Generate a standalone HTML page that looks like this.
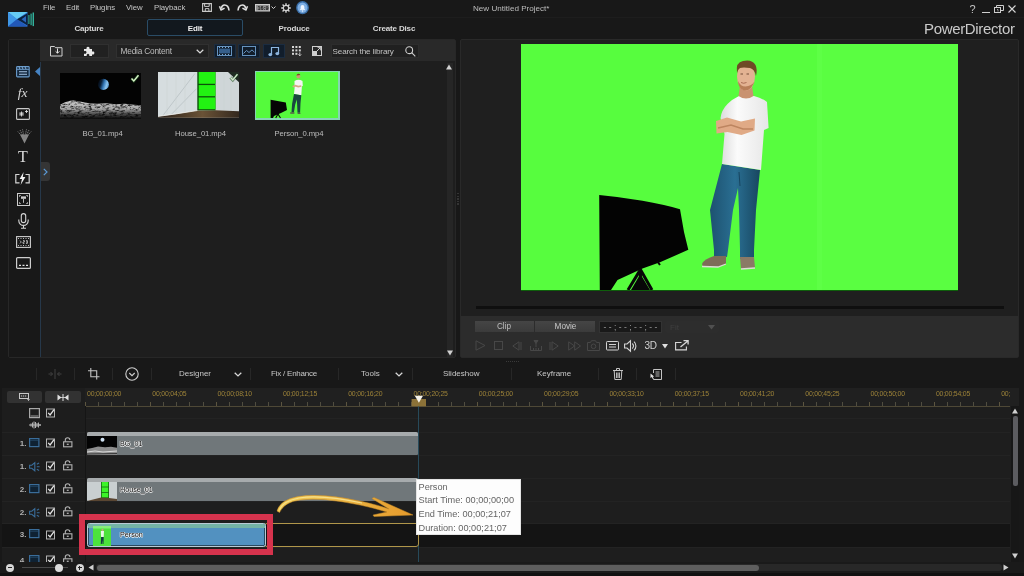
<!DOCTYPE html>
<html lang="en">
<head>
<meta charset="utf-8">
<title>New Untitled Project* - PowerDirector</title>
<style>
*{box-sizing:border-box;margin:0;padding:0}
html,body{width:1024px;height:576px;overflow:hidden;background:#181818}
body{position:relative;font-family:"Liberation Sans",sans-serif;font-size:9px;color:#c8c8c8;opacity:0.999}
.a{position:absolute}
.t{position:absolute;white-space:nowrap;line-height:1;transform:translateY(-50%)}
.c{position:absolute;white-space:nowrap;line-height:1;transform:translate(-50%,-50%)}
svg{position:absolute;overflow:visible}
.sep{position:absolute;width:1px;height:12px;top:368px;background:#272727}
.rt{position:absolute;top:394px;font-size:6.900px;color:#9c8238;line-height:1;transform:translateY(-50%);white-space:nowrap;letter-spacing:-0.200px}
.lbl{font-size:7.200px;color:#000;text-shadow:0.700px 0 0.400px #fff,-0.700px 0 0.400px #fff,0 0.700px 0.400px #fff,0 -0.700px 0.400px #fff,0 0 1.200px #fff}
.chk{position:absolute;width:9px;height:9px;border:1px solid #c4c4c4}
.hl{position:absolute;left:2px;width:1008px;height:1px;background:#232323}
</style>
</head>
<body>
<!-- ============ TITLE / MENU BAR ============ -->
<div class="a" id="menubar" style="left:0;top:0;width:1024px;height:38px;background:#181818"></div>
<div class="a" style="left:40px;top:17px;width:984px;height:1px;background:#1d1d1d"></div>
<!-- logo -->
<svg style="left:7.800px;top:11.500px" width="27" height="15" viewBox="0 0 27 15">
  <rect x="0" y="0" width="19.500" height="14.500" fill="#2c78d6"/>
  <polygon points="0,0 19.500,0 9,7.300" fill="#66ccf3"/>
  <polygon points="0,0 9,7.300 0,14.500" fill="#3f97e6"/>
  <polygon points="0,14.500 9,7.300 19.500,14.500" fill="#2258b8"/>
  <polygon points="19.500,1.200 9,7.300 19.500,13.400" fill="#0c2240"/>
  <polygon points="18,4 13.500,7.300 18,10.600" fill="#2a66bc"/>
  <rect x="20.300" y="3" width="1.200" height="9" fill="#2aa894"/>
  <rect x="22.500" y="1.600" width="1.200" height="11.600" fill="#2fb8a2"/>
  <rect x="24.600" y="0.500" width="1.300" height="13.600" fill="#36c4ac"/>
</svg>
<span class="t" style="left:43px;top:7.500px;font-size:7.800px;letter-spacing:-0.050px;color:#c6c6c6">File</span>
<span class="t" style="left:66px;top:7.500px;font-size:7.800px;letter-spacing:-0.050px;color:#c6c6c6">Edit</span>
<span class="t" style="left:90px;top:7.500px;font-size:7.800px;letter-spacing:-0.050px;color:#c6c6c6">Plugins</span>
<span class="t" style="left:126px;top:7.500px;font-size:7.800px;letter-spacing:-0.050px;color:#c6c6c6">View</span>
<span class="t" style="left:154px;top:7.500px;font-size:7.800px;letter-spacing:-0.050px;color:#c6c6c6">Playback</span>
<span class="t" style="left:473px;top:8.5px;font-size:8.100px;color:#bdbdbd">New Untitled Project*</span>
<span class="t" id="brand" style="left:924px;top:27.800px;font-size:15px;color:#cacaca;letter-spacing:-0.340px">PowerDirector</span>
<!-- tabs -->
<div class="a" style="left:147px;top:19px;width:96px;height:17px;border:1px solid #2a4c66;border-radius:2px;background:#12181e"></div>
<span class="c" style="left:89px;top:28.5px;font-weight:bold;font-size:8px;letter-spacing:-0.150px;color:#d8d8d8">Capture</span>
<span class="c" style="left:195px;top:28.5px;font-weight:bold;font-size:8px;letter-spacing:-0.150px;color:#f0f0f0">Edit</span>
<span class="c" style="left:294px;top:28.5px;font-weight:bold;font-size:8px;letter-spacing:-0.150px;color:#d8d8d8">Produce</span>
<span class="c" style="left:394px;top:28.5px;font-weight:bold;font-size:8px;letter-spacing:-0.150px;color:#d8d8d8">Create Disc</span>

<!-- ============ MEDIA PANEL ============ -->
<div class="a" style="left:8px;top:39px;width:448px;height:318.500px;background:#1e1e1e;border:1px solid #272727;border-radius:2px"></div>
<div class="a" style="left:9px;top:40px;width:31px;height:316.500px;background:#181818"></div>
<div class="a" style="left:40px;top:40px;width:415px;height:21px;background:#292929"></div>
<div class="a" style="left:40px;top:62px;width:1px;height:294.500px;background:#26384a"></div>

<!-- media toolbar -->
<svg style="left:50px;top:44.500px" width="13" height="12" viewBox="0 0 13 12" fill="none" stroke="#cfcfcf" stroke-width="1">
  <path d="M0.5 1.5h4l1 1.2h6.5v8.3h-11.5z"/>
  <path d="M7.5 3.5v4.5M5.6 6.3l1.9 1.9 1.9-1.9" stroke="#e6e6e6"/>
</svg>
<div class="a" style="left:70px;top:43.700px;width:39px;height:14px;background:#212121;border:1px solid #303030"></div>
<svg style="left:83px;top:44.700px" width="12" height="12" viewBox="0 0 12 12">
  <path d="M1 4h2.6a1.6 1.6 0 1 1 2.8 0H9v2.6a1.6 1.6 0 1 1 0 2.8V11H6.2a1.4 1.4 0 1 0-2.4 0H1V8.4a1.5 1.5 0 1 0 0-2.2z" fill="#e8e8e8"/>
</svg>
<div class="a" style="left:116px;top:43.5px;width:93px;height:14.5px;background:#212121;border:1px solid #303030"></div>
<span class="t" style="left:120.5px;top:51px;font-size:8.300px;letter-spacing:-0.200px;color:#bcbcbc">Media Content</span>
<svg style="left:196px;top:48.5px" width="8" height="5" viewBox="0 0 8 5" fill="none" stroke="#d8d8d8" stroke-width="1.3"><path d="M0.7 0.7l3.3 3.2 3.3-3.2"/></svg>
<!-- filter buttons -->
<div class="a" style="left:213.5px;top:44px;width:22px;height:14px;background:#111d2b;border:1px solid #1b2c40"></div>
<svg style="left:217px;top:46px" width="15" height="10" viewBox="0 0 15 10"><rect x="0.5" y="0.5" width="14" height="9" fill="none" stroke="#6593bf"/><rect x="2" y="2.6" width="11" height="4.8" fill="#365f8b"/><path d="M2 1.5h1M5 1.5h1M8 1.5h1M11 1.5h1M2 8.5h1M5 8.5h1M8 8.5h1M11 8.5h1" stroke="#7fa9d0" stroke-width="1"/></svg>
<div class="a" style="left:238px;top:44px;width:22px;height:14px;background:#111d2b;border:1px solid #1b2c40"></div>
<svg style="left:242px;top:46px" width="14" height="10" viewBox="0 0 14 10" fill="none" stroke="#6593bf"><rect x="0.5" y="0.5" width="13" height="9"/><path d="M1.5 7.5l3-3 2.5 2 3-2.6 2.5 2.4"/></svg>
<div class="a" style="left:263px;top:44px;width:22px;height:14px;background:#111d2b;border:1px solid #1b2c40"></div>
<svg style="left:268px;top:45.5px" width="12" height="11" viewBox="0 0 12 11"><path d="M3.5 8.5v-7h7v6" fill="none" stroke="#8db7e0" stroke-width="1.2"/><ellipse cx="2.3" cy="8.6" rx="1.9" ry="1.6" fill="#8db4dd"/><ellipse cx="9.3" cy="7.6" rx="1.9" ry="1.6" fill="#8db4dd"/></svg>
<svg style="left:292px;top:46px" width="11" height="10" viewBox="0 0 11 10" fill="#d6d6d6"><rect x="0" y="0" width="2" height="2"/><rect x="3.4" y="0" width="2" height="2"/><rect x="6.8" y="0" width="2" height="2"/><rect x="0" y="3.4" width="2" height="2"/><rect x="3.4" y="3.4" width="2" height="2"/><rect x="6.8" y="3.4" width="2" height="2"/><rect x="0" y="6.8" width="2" height="2"/><rect x="3.4" y="6.8" width="2" height="2"/><path d="M7.8 6.4v3.4M6.4 8.4l1.4 1.4 1.4-1.4" stroke="#d6d6d6" fill="none" stroke-width="0.9"/></svg>
<svg style="left:312px;top:46px" width="10" height="10" viewBox="0 0 10 10"><rect x="0.5" y="0.5" width="9" height="9" fill="none" stroke="#cfcfcf"/><rect x="1" y="5" width="4" height="4" fill="#cfcfcf"/><path d="M4.5 5.5l4-4M5.6 1.3h3.1v3.1" stroke="#cfcfcf" fill="none" stroke-width="1"/></svg>
<div class="a" style="left:330.5px;top:44px;width:88px;height:14px;background:#202020;border:1px solid #2c2c2c"></div>
<span class="t" style="left:332.5px;top:51.5px;font-size:8.100px;letter-spacing:-0.120px;color:#c2c2c2">Search the library</span>
<svg style="left:405px;top:46px" width="11" height="11" viewBox="0 0 11 11" fill="none" stroke="#cfcfcf" stroke-width="1.1"><circle cx="4.2" cy="4.2" r="3.4"/><path d="M6.7 6.7l3.6 3.6"/></svg>
<!-- media scrollbar -->
<div class="a" style="left:446.500px;top:63px;width:6.500px;height:293.500px;background:#262626"></div>
<svg style="left:446px;top:64px" width="6" height="6" viewBox="0 0 6 6"><polygon points="3,0.5 6,5.5 0,5.5" fill="#d0d0d0"/></svg>
<svg style="left:446.500px;top:350px" width="6" height="6" viewBox="0 0 6 6"><polygon points="0,0.5 6,0.5 3,5.5" fill="#d0d0d0"/></svg>
<!-- sidebar icons -->
<svg style="left:16.200px;top:66px" width="14" height="11.500" viewBox="0 0 14 11.500"><rect x="0.600" y="0.600" width="12.600" height="10.300" rx="0.800" fill="#14293f" stroke="#6a9ccc" stroke-width="1.100"/><path d="M1 3.300h12" stroke="#6a9ccc" stroke-width="1"/><path d="M3 0.800l1 2.400M6 0.800l1 2.400M9 0.800l1 2.400" stroke="#8fb8e0" stroke-width="0.900"/><path d="M3 5.800h8M3 8.300h8" stroke="#a9c8e8" stroke-width="1.100"/></svg>
<svg style="left:34.5px;top:67px" width="5" height="9" viewBox="0 0 5 9"><polygon points="5,0 5,9 0,4.500" fill="#4683c2"/></svg>
<span class="c" style="left:22.500px;top:92.800px;font-family:'Liberation Serif',serif;font-style:italic;font-size:13.500px;color:#d8d8d8">fx</span>
<svg style="left:16px;top:108.300px" width="14" height="12" viewBox="0 0 14 12"><rect x="0.6" y="0.6" width="12.8" height="10.8" rx="1" fill="none" stroke="#c8c8c8" stroke-width="1.1"/><path d="M3 6h5M5.5 3.5v5M3.8 4.2l3.4 3.6M7.2 4.2l-3.4 3.6" stroke="#e0e0e0" stroke-width="0.9"/><path d="M9 3.5h3M10.5 2v3" stroke="#e0e0e0" stroke-width="0.9"/></svg>
<svg style="left:16.500px;top:128.500px" width="15" height="15" viewBox="0 0 15 15"><polygon points="3,5.500 12,5.500 7.500,14.500" fill="#868686"/><path d="M7.500 10L0.800 2.500M7.500 10L3 1M7.500 10L5.500 0.300M7.500 10L9.500 0.300M7.500 10L12 1M7.500 10L14.200 2.500" stroke="#808080" stroke-width="0.900" stroke-dasharray="1.400 0.800"/></svg>
<span class="c" style="left:23px;top:156.600px;font-family:'Liberation Serif',serif;font-size:16px;color:#dadada">T</span>
<svg style="left:15.400px;top:172px" width="15" height="13" viewBox="0 0 15 13"><path d="M4.5 2.5H0.8v8.4h3.7M10.5 2.5h3.7v8.4h-3.7" fill="none" stroke="#d4d4d4" stroke-width="1.2"/><polygon points="8.6,0 4.6,7 7,7 5.6,13 10.4,5 7.8,5" fill="#f0f0f0"/></svg>
<svg style="left:16.500px;top:193px" width="13" height="13" viewBox="0 0 13 13" fill="none" stroke="#cdcdcd"><rect x="0.5" y="0.5" width="12" height="12" stroke-width="1"/><rect x="4" y="3.4" width="5" height="2.4" fill="#cdcdcd" stroke="none"/><path d="M6.5 5.8v4M2.5 2.5h1.2M9.3 2.5h1.2M2.5 10.5h1.2M9.3 10.5h1.2M2.5 2.5v1.2M10.5 2.5v1.2M2.5 9.3v1.2M10.5 9.3v1.2" stroke-width="0.9"/></svg>
<svg style="left:18px;top:213px" width="11" height="16" viewBox="0 0 11 16" fill="none" stroke="#d4d4d4" stroke-width="1.1"><rect x="3.3" y="0.6" width="4.4" height="9" rx="2.2"/><path d="M0.8 6.5v1.2a4.7 4.7 0 0 0 9.4 0V6.5M5.5 12.4v2.6M3 15.2h5"/></svg>
<svg style="left:15.700px;top:236px" width="15" height="12" viewBox="0 0 15 12" fill="none" stroke="#cdcdcd"><rect x="0.6" y="0.6" width="13.8" height="10.8" stroke-width="1.1"/><path d="M2 2.5h1M4.5 2.5h1M7 2.5h1M9.5 2.5h1M12 2.5h1M2 9.5h1M4.5 9.5h1M7 9.5h1M9.5 9.5h1M12 9.5h1" stroke-width="0.9"/><path d="M4 4.6l1.3 1.4L4 7.4M7 4.6h1.4v1.4H7v1.4h1.4M10 4.6h1.4v2.8H10M10 6h1.4" stroke-width="0.8"/></svg>
<svg style="left:15.700px;top:257px" width="15" height="12" viewBox="0 0 15 12" fill="none" stroke="#cdcdcd"><rect x="0.6" y="0.6" width="13.8" height="10.8" rx="1" stroke-width="1.2"/><path d="M3 8.4h2M6.5 8.4h2M10 8.4h2" stroke="#e4e4e4" stroke-width="1.4"/></svg>
<!-- expand tab -->
<div class="a" style="left:41px;top:162px;width:9px;height:19px;background:#353535;border-radius:0 3px 3px 0"></div>
<svg style="left:43px;top:168px" width="5" height="8" viewBox="0 0 5 8" fill="none" stroke="#5b9ad6" stroke-width="1.2"><path d="M0.8 0.8l3.2 3.2-3.2 3.2"/></svg>

<!-- thumbnails -->
<!-- BG_01 -->
<svg style="left:60px;top:72.500px" width="81" height="45.500" viewBox="0 0 81 46" preserveAspectRatio="none">
  <defs>
    <linearGradient id="earth" x1="0" y1="0.300" x2="1" y2="0.600"><stop offset="0" stop-color="#03060b"/><stop offset="0.300" stop-color="#0b2038"/><stop offset="0.550" stop-color="#3478b8"/><stop offset="0.800" stop-color="#8cc4ee"/><stop offset="1" stop-color="#5a9ad0"/></linearGradient>
    <linearGradient id="moon" x1="0" y1="0" x2="0" y2="1"><stop offset="0" stop-color="#d6d6d6"/><stop offset="0.500" stop-color="#a8a8a8"/><stop offset="0.780" stop-color="#4a4a4a"/><stop offset="1" stop-color="#0c0c0c"/></linearGradient>
    <filter id="rock" x="0" y="0" width="1" height="1"><feTurbulence type="fractalNoise" baseFrequency="0.28 0.5" numOctaves="3" seed="7"/><feColorMatrix type="matrix" values="0 0 0 0 0  0 0 0 0 0  0 0 0 0 0  2.400 0 0 0 -1.050"/></filter>
    <clipPath id="moonclip"><path d="M0 32l5-2.500 7-2 8 1.200 9 1.800 8 0.500 9-0.500 10 1 9-0.300 9 0.800 7 0.500V46H0z"/></clipPath>
  </defs>
  <rect width="81" height="46" fill="#030303"/>
  <circle cx="43.300" cy="11.500" r="5.600" fill="url(#earth)"/>
  <path d="M38.500 8.500a5.600 5.600 0 0 0 2 8.200a7.500 7.500 0 0 1-2-8.200z" fill="#030303"/>
  <g clip-path="url(#moonclip)"><rect y="26" width="81" height="20" fill="url(#moon)"/><rect y="26" width="81" height="20" filter="url(#rock)"/></g>
  <path d="M71.500 5.500l2.300 2.600 4.700-5.800" stroke="#1d4a1c" stroke-width="3" fill="none" opacity="0.700"/>
  <path d="M71.500 5.500l2.300 2.600 4.700-5.800" stroke="#d8f2c8" stroke-width="1.400" fill="none"/>
</svg>
<!-- House_01 -->
<svg style="left:158px;top:72px" width="81" height="45.700" viewBox="0 0 81 46.500" preserveAspectRatio="none">
  <defs><linearGradient id="flr" x1="0" y1="0" x2="1" y2="0"><stop offset="0" stop-color="#2a2018"/><stop offset="0.550" stop-color="#6a5236"/><stop offset="1" stop-color="#33281e"/></linearGradient></defs>
  <rect width="81" height="46.500" fill="#d3dadb"/>
  <polygon points="0,0 39.500,0 39.500,39.500 0,45.500" fill="#d6dddf"/>
  <polygon points="57.500,0 81,0 81,40 57.500,39" fill="#cfd6d8"/>
  <path d="M37 1.500L5.500 43.500M38.500 17L13.500 43" stroke="#b3bcbf" stroke-width="0.700"/>
  <path d="M9 0v43M18 0v42M27 0v41M66 0v39M73 0v40" stroke="#c8d0d2" stroke-width="0.500"/>
  <polygon points="0,46.500 0,45.400 17,43 39.500,39.300 57.500,39 81,40 81,46.500" fill="url(#flr)"/>
  <path d="M0 45.200L17 42.800 39.500 39.200" stroke="#f2f2ee" stroke-width="0.800" fill="none"/>
  <rect x="39.300" y="0" width="18.200" height="39" fill="#0c4f0a"/>
  <rect x="40.700" y="0" width="16.800" height="12" fill="#22f212"/>
  <rect x="40.700" y="13.300" width="16.800" height="11.300" fill="#22f212"/>
  <rect x="40.700" y="25.900" width="16.800" height="12" fill="#22f212"/>
  <polygon points="70,0 81,0 81,10.500" fill="#1f2a22"/>
  <path d="M72.500 5.500l2.300 2.600 4.700-5.800" stroke="#1d4a1c" stroke-width="3" fill="none" opacity="0.600"/>
  <path d="M72.500 5.500l2.300 2.600 4.700-5.800" stroke="#cfe8cc" stroke-width="1.400" fill="none"/>
</svg>
<!-- Person_0 -->
<div class="a" style="left:254.500px;top:70.500px;width:85px;height:49px;background:#86d4b4"></div>
<svg style="left:256px;top:72px" width="82" height="46" viewBox="0 0 82 46">
  <rect width="82" height="46" fill="#55fa3c"/>
  <path d="M14.600 27.700L29.800 30.600 31 38 25 41 18 44 17 46H14.600z" fill="#050505"/>
  <path d="M22 42l-2.300 4M22 42l2.500 4" stroke="#050505" stroke-width="1.100"/>
  <circle cx="42.400" cy="4.400" r="2" fill="#c99a78"/>
  <path d="M40.500 3.400a2 2 0 0 1 3.800-0.400z" fill="#7a4a24"/>
  <path d="M38.500 9q4-2.400 8 0l0.300 5-0.900 0.300-0.600 8.900-7.300-1.200 0.600-6z" fill="#f4f4f4"/>
  <path d="M36.700 14.800l2.600-1.200 3 1 3-0.600" stroke="#d6a684" stroke-width="1.700" fill="none"/>
  <path d="M38 22l7.300 1.200-0.800 8-0.400 9.500-2.600 0-0.400-9-0.300-4.200-1.600 5-1.300 8-2.400-0.200 0.600-8.500z" fill="#1a4640"/>
  <path d="M34.200 41h4.200M41.600 41.400h2.800" stroke="#5a5a48" stroke-width="1.400"/>
</svg>
<span class="c" style="left:102.500px;top:133.500px;font-size:7.700px;letter-spacing:-0.100px;color:#bebebe">BG_01.mp4</span>
<span class="c" style="left:200.5px;top:133.5px;font-size:7.700px;letter-spacing:-0.100px;color:#bebebe">House_01.mp4</span>
<span class="c" style="left:299px;top:133.5px;font-size:7.700px;letter-spacing:-0.100px;color:#bebebe">Person_0.mp4</span>

<!--MEDIA-END-->
<!-- menubar icons -->
<svg style="left:202px;top:3px" width="10" height="9" viewBox="0 0 10 9" fill="none" stroke="#c8c8c8" stroke-width="1.100"><path d="M0.600 0.600h8.800v7.800h-8.800z"/><path d="M2.600 0.600v2.800h4.600v-2.800M3.300 8.400v-2.800h3.600v2.800" stroke-width="1"/></svg>
<svg style="left:219px;top:3px" width="11" height="9" viewBox="0 0 11 9" fill="none" stroke="#dedede" stroke-width="1.600"><path d="M10 7.500Q9.500 2 5.500 2Q3 2 2.200 5.500"/><path d="M0.500 3.200L2 7 5.600 5.200" stroke-width="1.500" stroke-linejoin="round"/></svg>
<svg style="left:237px;top:3px" width="11" height="9" viewBox="0 0 11 9" fill="none" stroke="#dedede" stroke-width="1.600"><path d="M1 7.500Q1.500 2 5.500 2Q8 2 8.800 5.500"/><path d="M10.500 3.200L9 7 5.400 5.200" stroke-width="1.500" stroke-linejoin="round"/></svg>
<svg style="left:255px;top:3.500px" width="15" height="7.500" viewBox="0 0 15 7.500"><rect x="0.500" y="0.500" width="14" height="6.500" fill="#8e8e8e" stroke="#cdcdcd"/></svg>
<span class="t" style="left:257.500px;top:7.600px;font-size:5.500px;color:#161616;font-weight:bold;line-height:1.1">16:9</span>
<svg style="left:271px;top:6px" width="5" height="4" viewBox="0 0 5 4" fill="none" stroke="#d0d0d0" stroke-width="1"><path d="M0.500 0.500l2 2 2-2"/></svg>
<svg style="left:281px;top:3px" width="10" height="10" viewBox="0 0 10 10" fill="none" stroke="#d4d4d4"><circle cx="5" cy="5" r="2.700" stroke-width="1.200"/><path d="M5 0.200v1.800M5 8v1.800M0.200 5h1.800M8 5h1.800M1.600 1.600l1.300 1.300M7.100 7.100l1.300 1.300M1.600 8.400l1.300-1.300M7.100 2.900l1.300-1.300" stroke-width="1.400"/></svg>
<svg style="left:295.500px;top:1.200px" width="13" height="13.400" viewBox="0 0 13 13.400"><ellipse cx="6.500" cy="6.700" rx="6.400" ry="6.600" fill="#3b6fa8"/><ellipse cx="6.500" cy="6.700" rx="5" ry="5.200" fill="#7eaee2"/><path d="M4.600 8.300V6a1.900 1.900 0 0 1 3.800 0v2.300z" fill="#eef5fd"/><rect x="3.900" y="8.200" width="5.200" height="0.900" fill="#eef5fd"/><circle cx="6.500" cy="10" r="0.700" fill="#eef5fd"/></svg>
<!-- window controls -->
<span class="c" style="left:972.5px;top:9px;font-size:11px;color:#c4c4c4">?</span>
<div class="a" style="left:982px;top:12px;width:8px;height:1px;background:#cfcfcf"></div>
<svg style="left:994px;top:5px" width="10" height="8" viewBox="0 0 10 8" fill="none" stroke="#cfcfcf" stroke-width="1"><rect x="0.500" y="2.500" width="6" height="5"/><path d="M2.500 2.500v-2h7v5h-3"/><path d="M3 4.500h1v2" stroke-width="0.700"/></svg>
<svg style="left:1008px;top:5px" width="8" height="8" viewBox="0 0 8 8" stroke="#d6d6d6" stroke-width="1.100"><path d="M0.500 0.500l7 7M7.500 0.500l-7 7"/></svg>

<!-- ============ PREVIEW PANEL ============ -->
<div class="a" style="left:460px;top:39px;width:559px;height:318.500px;background:#1f1f1f;border:1px solid #292929;border-radius:2px"></div>
<div class="a" style="left:461px;top:316px;width:557px;height:40.500px;background:#2c2c2c"></div>
<!-- green screen -->
<svg style="left:521.300px;top:44px" width="437" height="246" viewBox="0 0 437 246">
  <defs>
    <linearGradient id="shirt" x1="0" y1="0" x2="1" y2="0"><stop offset="0" stop-color="#dcdcdc"/><stop offset="0.35" stop-color="#fbfbfb"/><stop offset="1" stop-color="#e6e6e6"/></linearGradient>
    <linearGradient id="jeans" x1="0" y1="0" x2="1" y2="0"><stop offset="0" stop-color="#1d5270"/><stop offset="0.5" stop-color="#2a6f93"/><stop offset="1" stop-color="#184760"/></linearGradient>
  </defs>
  <rect width="437" height="246" fill="#57fd3e"/>
  <rect x="296" y="0" width="141" height="246" fill="#5afe41"/><rect x="296" y="0" width="5" height="246" fill="#5eff46"/>
  <!-- softbox -->
  <path d="M78.200 151Q100 153 121.500 156.800T159 165.200L163 188 167.300 205.800 139 218.300 121.500 224.500 96.500 236 90 246H78.800z" fill="#030303"/>
  <path d="M119.400 225.600L107 246M119.400 225.600L131 246M119.400 225v21" stroke="#070707" stroke-width="3" fill="none"/>
  <path d="M110 246l9.400-16 9.600 16z" fill="#070707"/>
  <path d="M136 217l3 4" stroke="#070707" stroke-width="2"/>
  <!-- person -->
  <g id="person">
    <!-- jeans -->
    <path d="M201 120l38 6-4 40-2 40 0 9-14 0 0-9-1-40-1-22-5 22-5 40-1 7-13-1 0-6-4-40z" fill="url(#jeans)"/>
    <path d="M219 142l-1-14" stroke="#174560" stroke-width="1"/>
    <!-- shoes -->
    <path d="M181 220q2-5 12-8l12 0 0 8-8 3-15 0z" fill="#7d6c58"/>
    <path d="M219 213h14l1 11-14 1z" fill="#8a7a66"/>
    <path d="M181 222.500l16 0.500 8-3M220 225l14-1" stroke="#dcdcd4" stroke-width="1.300" fill="none"/>
    <!-- shirt -->
    <path d="M218 52l15 0q8 2 13 6l1.600 26-4.600 2-3 40-39-6 2.500-30-4-16q1-8 7-14q5-5 11.500-8z" fill="url(#shirt)"/>
    <!-- arms -->
    <path d="M195 77l11-3.500 14 4 14-3-0.500 12-13 4.500-14-3-11 1.500z" fill="#e0aa86"/>
    <path d="M197 84l13-3 12 4 10 0" stroke="#bd8560" stroke-width="1.600" fill="none"/>
    <!-- neck/head -->
    <path d="M219 42l12 0 1.500 10q-7.500 5-15 0z" fill="#c99270"/>
    <ellipse cx="225" cy="32.500" rx="9" ry="14" fill="#e3b292"/>
    <path d="M216 29q-1.500-11 6-12q9-2 12.500 4q2 4 0.500 11q-1.500-7-6-8q-7-1-10 0q-2 1-3 5z" fill="#6f4a26"/>
    <path d="M217 37q0 7 6 9.500q7 1 10.500-9q-3 4.500-9 5q-5 0-7.500-5.500z" fill="#b87e58"/>
    <path d="M219.500 30h2.500M225.500 30h2.500" stroke="#6a4430" stroke-width="0.900"/>
    <path d="M220 38.500q2.500 1.500 5.500 0" stroke="#9a5c44" stroke-width="0.800" fill="none"/>
  </g>
</svg>
<div class="a" style="left:521.300px;top:290px;width:437px;height:1.200px;background:#0e5e0b"></div>
<!-- seek bar -->
<div class="a" style="left:476px;top:306.300px;width:528px;height:2.900px;background:#0f0f0f"></div>
<!-- clip/movie -->
<div class="a" style="left:475px;top:321px;width:59px;height:11.200px;background:linear-gradient(#454545,#3b3b3b)"></div>
<div class="a" style="left:535px;top:321px;width:60px;height:11.200px;background:linear-gradient(#454545,#3b3b3b)"></div>
<span class="c" style="left:504px;top:327px;font-size:8.200px;color:#bdbdbd">Clip</span>
<span class="c" style="left:565.500px;top:327px;font-size:8.200px;color:#c9c9c9">Movie</span>
<div class="a" style="left:599px;top:321px;width:63px;height:12px;background:#191919;border:1px solid #333"></div>
<span class="c" style="left:630.500px;top:327px;font-size:8.500px;color:#9a9a9a;letter-spacing:2.400px;margin-left:1.200px">--;--;--;--</span>
<div class="a" style="left:664.500px;top:321px;width:54.500px;height:12px;background:#2d2d2d;border-radius:2px"></div>
<span class="t" style="left:670px;top:327.500px;font-size:8px;color:#3f3f3f">Fit</span>
<svg style="left:708px;top:325px" width="7" height="5" viewBox="0 0 7 5"><polygon points="0,0 7,0 3.500,4.500" fill="#505050"/></svg>
<!-- transport -->
<svg style="left:475px;top:340px" width="11" height="11" viewBox="0 0 11 11" fill="none" stroke="#474747" stroke-width="1"><path d="M1 0.800l9 4.700-9 4.700z"/></svg>
<svg style="left:494px;top:341px" width="9" height="9" viewBox="0 0 9 9" fill="none" stroke="#474747" stroke-width="1"><rect x="0.500" y="0.500" width="8" height="8"/></svg>
<svg style="left:512px;top:340.500px" width="10" height="10" viewBox="0 0 10 10" fill="none" stroke="#474747" stroke-width="1"><path d="M7 0.800l-6.200 4.200 6.200 4.200zM9 1v8"/></svg>
<svg style="left:530px;top:340px" width="12" height="11" viewBox="0 0 12 11" fill="none" stroke="#474747" stroke-width="1"><path d="M0.500 6v4.500h11V6M3.500 8v2M6 8v2M8.500 8v2"/><polygon points="4,0.500 8,0.500 6,3.500" fill="#474747"/><path d="M6 3v4"/></svg>
<svg style="left:549px;top:340.500px" width="10" height="10" viewBox="0 0 10 10" fill="none" stroke="#474747" stroke-width="1"><path d="M3 0.800l6.200 4.200-6.200 4.200zM1 1v8"/></svg>
<svg style="left:568px;top:340.500px" width="13" height="10" viewBox="0 0 13 10" fill="none" stroke="#474747" stroke-width="1"><path d="M0.700 0.800l5.800 4.200-5.800 4.200zM6.700 0.800l5.800 4.200-5.800 4.200z"/></svg>
<svg style="left:587px;top:340px" width="13" height="11" viewBox="0 0 13 11" fill="none" stroke="#474747" stroke-width="1"><path d="M0.500 2.500h3l1-1.800h4l1 1.800h3v8h-12z"/><circle cx="6.500" cy="6.300" r="2.300"/></svg>
<svg style="left:605.500px;top:340.800px" width="13" height="9.500" viewBox="0 0 13 9.500" fill="none" stroke="#d2d2d2" stroke-width="1"><rect x="0.500" y="0.500" width="12" height="8.500" rx="0.800"/><path d="M3 3.500h7M3 6h7" stroke-width="1"/></svg>
<svg style="left:624px;top:339.500px" width="13" height="12" viewBox="0 0 13 12" fill="none" stroke="#d6d6d6" stroke-width="1.100"><path d="M0.600 4h2.400l3.500-3.200v10.400L3 8H0.600z"/><path d="M8.300 3.500a3.600 3.600 0 0 1 0 5M10 1.600a6 6 0 0 1 0 8.800"/></svg>
<span class="t" style="left:644.500px;top:346px;font-size:10px;color:#d2d2d2;letter-spacing:-0.300px">3D</span>
<svg style="left:662px;top:343.500px" width="6" height="5" viewBox="0 0 6 5"><polygon points="0,0 6,0 3,4.500" fill="#e0e0e0"/></svg>
<svg style="left:674.500px;top:340.300px" width="14" height="10.500" viewBox="0 0 14 10.500" fill="none" stroke="#d6d6d6" stroke-width="1.100"><path d="M6.500 2.500H0.600v7.400h10.800V6.500"/><path d="M5.500 7l7.300-6M8.500 0.700h4.600v3.800" stroke-width="1.300"/></svg>
<!-- splitter dots -->
<div class="a" style="left:456.700px;top:193px;width:2.500px;height:13px;background:repeating-linear-gradient(#343434 0 1.300px,transparent 1.300px 2.600px)"></div>
<div class="a" style="left:505.500px;top:360.500px;width:13px;height:1.500px;background:repeating-linear-gradient(90deg,#3a3a3a 0 1px,transparent 1px 2px)"></div>

<!--PREVIEW-END-->
<!-- ============ EDIT TOOLBAR ============ -->
<div class="sep" style="left:36px"></div><div class="sep" style="left:74px"></div><div class="sep" style="left:112px"></div><div class="sep" style="left:151px"></div>
<div class="sep" style="left:250px"></div><div class="sep" style="left:338px"></div><div class="sep" style="left:412px"></div><div class="sep" style="left:511px"></div>
<div class="sep" style="left:598px"></div><div class="sep" style="left:636px"></div><div class="sep" style="left:675px"></div>
<svg style="left:48px;top:369px" width="14" height="10" viewBox="0 0 14 10" fill="none" stroke="#404040" stroke-width="1"><path d="M7 0v10M0.500 5h4M9.500 5h4"/><path d="M2.500 3l2 2-2 2M11.500 3l-2 2 2 2" /></svg>
<svg style="left:87.500px;top:368.200px" width="11.500" height="11.500" viewBox="0 0 11.500 11.500" fill="none" stroke="#c4c4c4" stroke-width="1.100"><path d="M2.800 0v8.700h8.700M0 2.800h8.700v8.700"/></svg>
<svg style="left:125px;top:367px" width="14" height="14" viewBox="0 0 14 14" fill="none" stroke="#cfcfcf" stroke-width="1.100"><circle cx="7" cy="7" r="6.200"/><path d="M4.300 6l2.700 2.700L9.700 6"/></svg>
<span class="t" style="left:179px;top:374px;font-size:8px;color:#c8c8c8">Designer</span>
<svg style="left:233.500px;top:372px" width="8" height="5" viewBox="0 0 8 5" fill="none" stroke="#d8d8d8" stroke-width="1.300"><path d="M0.700 0.700l3.300 3.200 3.300-3.200"/></svg>
<span class="t" style="left:271px;top:374px;font-size:8px;letter-spacing:-0.220px;color:#c8c8c8">Fix / Enhance</span>
<span class="t" style="left:361px;top:374px;font-size:8px;color:#c8c8c8">Tools</span>
<svg style="left:394.500px;top:372px" width="8" height="5" viewBox="0 0 8 5" fill="none" stroke="#d8d8d8" stroke-width="1.300"><path d="M0.700 0.700l3.300 3.200 3.300-3.200"/></svg>
<span class="t" style="left:443px;top:374px;font-size:8px;color:#c8c8c8">Slideshow</span>
<span class="t" style="left:537px;top:374px;font-size:8px;color:#c8c8c8">Keyframe</span>
<svg style="left:612.500px;top:368px" width="10" height="12" viewBox="0 0 10 12" fill="none" stroke="#c4c4c4" stroke-width="1"><path d="M0 2.500h10M3.500 2.500v-2h3v2M1.200 2.500l0.600 9h6.400l0.600-9M3.600 4.500v5.500M5 4.500v5.500M6.400 4.500v5.500"/></svg>
<svg style="left:650px;top:368.500px" width="12" height="11" viewBox="0 0 12 11" fill="none" stroke="#c4c4c4" stroke-width="1"><path d="M3.500 4V0.500h8v10h-8V9.500"/><path d="M5.500 3h4M5.500 5h4M5.500 7h4" stroke-width="0.900"/><polygon points="0.500,4.500 0.500,9 1.800,8 2.800,10 3.600,9.600 2.700,7.700 4.200,7.500" fill="#e4e4e4" stroke="none"/></svg>

<!-- ============ TIMELINE ============ -->
<div class="a" style="left:2px;top:388.300px;width:1017px;height:188px;background:#1e1e1e"></div>
<div class="a" style="left:2px;top:388.300px;width:1017px;height:17.500px;background:#202020"></div>
<div class="a" style="left:0;top:572px;width:1024px;height:4px;background:#111"></div>
<div class="a" style="left:2px;top:388.300px;width:83px;height:176px;background:#1d1d1d"></div>
<!-- ruler buttons -->
<div class="a" style="left:7px;top:391px;width:35px;height:12px;background:#323232;border-radius:2px"></div>
<div class="a" style="left:45px;top:391px;width:36px;height:12px;background:#323232;border-radius:2px"></div>
<svg style="left:19px;top:393px" width="11" height="8" viewBox="0 0 11 8" fill="none" stroke="#c8c8c8" stroke-width="1"><rect x="0.500" y="0.500" width="9" height="5"/><path d="M2 3h6" stroke-dasharray="1.200 0.800"/><path d="M9.500 4v3.500M8.300 6.300l1.200 1.200 1.200-1.200" stroke-width="0.800"/></svg>
<svg style="left:57px;top:393.500px" width="12" height="7" viewBox="0 0 12 7"><path d="M6 0v7" stroke="#e0e0e0" stroke-width="1"/><polygon points="0.500,0.500 4.500,3.500 0.500,6.500" fill="#e0e0e0"/><polygon points="11.500,0.500 7.500,3.500 11.500,6.500" fill="#e0e0e0"/><path d="M3.500 3.500h5" stroke="#e0e0e0" stroke-width="0.800"/></svg>
<!-- ruler -->
<div class="a" style="left:85px;top:405.600px;width:925px;height:1px;background:#4e4836"></div>
<div class="a" style="left:85px;top:402.300px;width:925px;height:3.700px;background:repeating-linear-gradient(90deg,#504d40 0 1px,transparent 1px 13.060px)"></div>
<div class="a" style="left:85px;top:401.800px;width:925px;height:4.200px;background:repeating-linear-gradient(90deg,#5c5540 0 1px,transparent 1px 65.300px)"></div>
<span class="rt" style="left:87px">00;00;00;00</span><span class="rt" style="left:152.300px">00;00;04;05</span><span class="rt" style="left:217.600px">00;00;08;10</span><span class="rt" style="left:282.900px">00;00;12;15</span><span class="rt" style="left:348.200px">00;00;16;20</span><span class="rt" style="left:413.500px">00;00;20;25</span><span class="rt" style="left:478.800px">00;00;25;00</span><span class="rt" style="left:544.100px">00;00;29;05</span><span class="rt" style="left:609.400px">00;00;33;10</span><span class="rt" style="left:674.700px">00;00;37;15</span><span class="rt" style="left:740px">00;00;41;20</span><span class="rt" style="left:805.300px">00;00;45;25</span><span class="rt" style="left:870.600px">00;00;50;00</span><span class="rt" style="left:935.900px">00;00;54;05</span><span class="rt" style="left:1001.200px;width:9px;overflow:hidden">00;</span>
<!-- track rows -->
<div class="a" style="left:2px;top:523.500px;width:1008px;height:23px;background:#141414"></div>
<div class="hl" style="top:432px"></div><div class="hl" style="top:455px"></div><div class="hl" style="top:478px"></div><div class="hl" style="top:501px"></div><div class="hl" style="top:523px"></div><div class="hl" style="top:546.500px"></div>
<div class="a" style="left:85px;top:418px;width:925px;height:1px;background:#232323"></div>
<div class="a" style="left:84.500px;top:406px;width:1px;height:158px;background:#151515"></div>
<svg style="left:28.500px;top:408px" width="11" height="11" viewBox="0 0 11 11" fill="none" stroke="#a8a8a8" stroke-width="1.200"><rect x="0.600" y="0.600" width="9.800" height="9" /><path d="M1.500 8h8" stroke="#7a7a7a" stroke-width="1.400"/></svg>
<svg style="left:46.300px;top:407.700px" width="9.500" height="9.500" viewBox="0 0 9.500 9.500" fill="none"><rect x="0.500" y="1" width="8" height="8" stroke="#b4b4b4" stroke-width="1"/><path d="M2.200 4.800l1.900 2.200 3.900-5.400" stroke="#e4e4e4" stroke-width="1.300"/></svg>
<svg style="left:28.500px;top:421px" width="12" height="8" viewBox="0 0 12 8" stroke="#b4b4b4" stroke-width="1" fill="none"><path d="M0 4h12M2 2.500v3M3.500 1.500v5M5 0.500v7M6.500 1v6M8 2v4M9.500 1.500v5M11 3v2"/></svg>
<span class="t" style="left:19.800px;top:443.5px;font-size:8px;color:#b2b2b2;font-weight:bold">1.</span>
<svg style="left:29px;top:437.7px" width="10.500" height="9.500" viewBox="0 0 10.500 9.500"><rect x="0.600" y="0.600" width="9.300" height="8" fill="#0f2233" stroke="#3a6d9a" stroke-width="1.200"/><path d="M1.200 2.300h8" stroke="#3a6d9a" stroke-width="0.600" opacity="0.700"/></svg>
<svg style="left:46.3px;top:438px" width="9.500" height="9.500" viewBox="0 0 9.500 9.500" fill="none"><rect x="0.500" y="1" width="8" height="8" stroke="#b4b4b4" stroke-width="1"/><path d="M2.200 4.800l1.900 2.200 3.900-5.400" stroke="#e4e4e4" stroke-width="1.300"/></svg>
<svg style="left:63.0px;top:437.0px" width="9.500" height="10.500" viewBox="0 0 9.500 10.500" fill="none" stroke="#b2b2b2" stroke-width="1.100"><rect x="0.600" y="4.800" width="8.300" height="5"/><path d="M2.300 4.800V3a2.300 2.300 0 0 1 4.600 0" /><path d="M3.800 7.300h1.900" stroke-width="1.300"/></svg>
<span class="t" style="left:19.800px;top:466.5px;font-size:8px;color:#b2b2b2;font-weight:bold">1.</span>
<svg style="left:29px;top:461.5px" width="11.500" height="9.500" viewBox="0 0 11.500 9.500" fill="none" stroke="#3a6d9a" stroke-width="1.100"><path d="M0.600 3.200h2.200l3-2.600v8.300l-3-2.600h-2.200z"/><path d="M7.800 2.200l2.300-1.100M7.800 4.750h2.800M7.800 7.300l2.300 1.100"/></svg>
<svg style="left:46.3px;top:461px" width="9.500" height="9.500" viewBox="0 0 9.500 9.500" fill="none"><rect x="0.500" y="1" width="8" height="8" stroke="#b4b4b4" stroke-width="1"/><path d="M2.200 4.800l1.900 2.200 3.900-5.400" stroke="#e4e4e4" stroke-width="1.300"/></svg>
<svg style="left:63.0px;top:460.0px" width="9.500" height="10.500" viewBox="0 0 9.500 10.500" fill="none" stroke="#b2b2b2" stroke-width="1.100"><rect x="0.600" y="4.800" width="8.300" height="5"/><path d="M2.300 4.800V3a2.300 2.300 0 0 1 4.600 0" /><path d="M3.800 7.300h1.900" stroke-width="1.300"/></svg>
<span class="t" style="left:19.800px;top:489.5px;font-size:8px;color:#b2b2b2;font-weight:bold">2.</span>
<svg style="left:29px;top:483.7px" width="10.500" height="9.500" viewBox="0 0 10.500 9.500"><rect x="0.600" y="0.600" width="9.300" height="8" fill="#0f2233" stroke="#3a6d9a" stroke-width="1.200"/><path d="M1.200 2.300h8" stroke="#3a6d9a" stroke-width="0.600" opacity="0.700"/></svg>
<svg style="left:46.3px;top:484px" width="9.500" height="9.500" viewBox="0 0 9.500 9.500" fill="none"><rect x="0.500" y="1" width="8" height="8" stroke="#b4b4b4" stroke-width="1"/><path d="M2.200 4.800l1.900 2.200 3.900-5.400" stroke="#e4e4e4" stroke-width="1.300"/></svg>
<svg style="left:63.0px;top:483.0px" width="9.500" height="10.500" viewBox="0 0 9.500 10.500" fill="none" stroke="#b2b2b2" stroke-width="1.100"><rect x="0.600" y="4.800" width="8.300" height="5"/><path d="M2.300 4.800V3a2.300 2.300 0 0 1 4.600 0" /><path d="M3.800 7.300h1.900" stroke-width="1.300"/></svg>
<span class="t" style="left:19.800px;top:512.5px;font-size:8px;color:#b2b2b2;font-weight:bold">2.</span>
<svg style="left:29px;top:507.5px" width="11.500" height="9.500" viewBox="0 0 11.500 9.500" fill="none" stroke="#3a6d9a" stroke-width="1.100"><path d="M0.600 3.200h2.200l3-2.600v8.300l-3-2.600h-2.200z"/><path d="M7.800 2.200l2.300-1.100M7.800 4.750h2.800M7.800 7.300l2.300 1.100"/></svg>
<svg style="left:46.3px;top:507px" width="9.500" height="9.500" viewBox="0 0 9.500 9.500" fill="none"><rect x="0.500" y="1" width="8" height="8" stroke="#b4b4b4" stroke-width="1"/><path d="M2.200 4.800l1.900 2.200 3.900-5.400" stroke="#e4e4e4" stroke-width="1.300"/></svg>
<svg style="left:63.0px;top:506.0px" width="9.500" height="10.500" viewBox="0 0 9.500 10.500" fill="none" stroke="#b2b2b2" stroke-width="1.100"><rect x="0.600" y="4.800" width="8.300" height="5"/><path d="M2.300 4.800V3a2.300 2.300 0 0 1 4.600 0" /><path d="M3.800 7.300h1.900" stroke-width="1.300"/></svg>
<span class="t" style="left:19.800px;top:535.0px;font-size:8px;color:#b2b2b2;font-weight:bold">3.</span>
<svg style="left:29px;top:529.2px" width="10.500" height="9.500" viewBox="0 0 10.500 9.500"><rect x="0.600" y="0.600" width="9.300" height="8" fill="#0f2233" stroke="#3a6d9a" stroke-width="1.200"/><path d="M1.200 2.300h8" stroke="#3a6d9a" stroke-width="0.600" opacity="0.700"/></svg>
<svg style="left:46.3px;top:529.5px" width="9.500" height="9.500" viewBox="0 0 9.500 9.500" fill="none"><rect x="0.500" y="1" width="8" height="8" stroke="#b4b4b4" stroke-width="1"/><path d="M2.200 4.800l1.900 2.200 3.900-5.400" stroke="#e4e4e4" stroke-width="1.300"/></svg>
<svg style="left:63.0px;top:528.5px" width="9.500" height="10.500" viewBox="0 0 9.500 10.500" fill="none" stroke="#b2b2b2" stroke-width="1.100"><rect x="0.600" y="4.800" width="8.300" height="5"/><path d="M2.300 4.800V3a2.300 2.300 0 0 1 4.600 0" /><path d="M3.800 7.300h1.900" stroke-width="1.300"/></svg>
<span class="t" style="left:19.800px;top:560.5px;font-size:8px;color:#b2b2b2;font-weight:bold">4.</span>
<svg style="left:29px;top:554.7px" width="10.500" height="9.500" viewBox="0 0 10.500 9.500"><rect x="0.600" y="0.600" width="9.300" height="8" fill="#0f2233" stroke="#3a6d9a" stroke-width="1.200"/><path d="M1.200 2.300h8" stroke="#3a6d9a" stroke-width="0.600" opacity="0.700"/></svg>
<svg style="left:46.3px;top:555px" width="9.500" height="9.500" viewBox="0 0 9.500 9.500" fill="none"><rect x="0.500" y="1" width="8" height="8" stroke="#b4b4b4" stroke-width="1"/><path d="M2.200 4.800l1.900 2.200 3.900-5.400" stroke="#e4e4e4" stroke-width="1.300"/></svg>
<svg style="left:63.0px;top:554.0px" width="9.500" height="10.500" viewBox="0 0 9.500 10.500" fill="none" stroke="#b2b2b2" stroke-width="1.100"><rect x="0.600" y="4.800" width="8.300" height="5"/><path d="M2.300 4.800V3a2.300 2.300 0 0 1 4.600 0" /><path d="M3.800 7.300h1.900" stroke-width="1.300"/></svg>
<!--ROWS-END-->

<!-- playhead line -->
<div class="a" style="left:418.300px;top:404px;width:1px;height:159px;background:#274a5a"></div>
<!-- BG_01 clip -->
<div class="a" style="left:86.500px;top:432px;width:331px;height:23px;background:#70777a;border-radius:2px 2px 1px 1px;overflow:hidden">
  <div class="a" style="left:0;top:0;width:331px;height:3.500px;background:#a7abad"></div>
  <svg style="left:0.500px;top:3.500px" width="30" height="19" viewBox="0 0 30 19"><rect width="30" height="19" fill="#040404"/><circle cx="15.500" cy="3.800" r="2" fill="#cfe0f0"/><path d="M0 13l5-1 6-1.500 7 0.800 6-0.500 6 1V19H0z" fill="#8c8c8c"/><path d="M0 16l8-1 8 1 14-1" stroke="#d8d8d8" stroke-width="1" fill="none"/><path d="M0 18l30-0.500" stroke="#3a3a3a" stroke-width="1"/></svg>
</div>
<span class="t lbl" style="left:120px;top:443.500px">BG_01</span>
<!-- House_01 clip -->
<div class="a" style="left:86.500px;top:478px;width:331px;height:23px;background:#70777a;border-radius:2px 2px 1px 1px;overflow:hidden">
  <div class="a" style="left:0;top:0;width:331px;height:3.500px;background:#a7abad"></div>
  <svg style="left:0.500px;top:3.500px" width="30" height="19" viewBox="0 0 30 19"><rect width="30" height="19" fill="#c9cfd1"/><rect x="14" y="0" width="8" height="16" fill="#146b10"/><rect x="14.800" y="0" width="6.400" height="4.600" fill="#3cf428"/><rect x="14.800" y="5.400" width="6.400" height="4.600" fill="#3cf428"/><rect x="14.800" y="10.800" width="6.400" height="4.600" fill="#3cf428"/><polygon points="0,19 14,15.500 22,16 30,17 30,19" fill="#5a4632"/></svg>
</div>
<span class="t lbl" style="left:120px;top:490px">House_01</span>
<!-- ghost outline -->
<div class="a" style="left:264px;top:522.500px;width:154.500px;height:24.500px;border:1px solid #b0964a;border-radius:3px"></div>
<!-- red highlight -->
<div class="a" style="left:79px;top:513.800px;width:194px;height:41.200px;border:6.500px solid #d6334d"></div>
<!-- Person clip -->
<div class="a" style="left:86.500px;top:522.500px;width:179.500px;height:24.300px;background:#5291c0;border:1px solid #b9cad6;border-radius:2.500px;overflow:hidden;box-shadow:0 0 0 1px #2a4a60 inset">
  <div class="a" style="left:0;top:0;width:179px;height:4.200px;background:#74b3a6"></div>
  <svg style="left:5.500px;top:2.500px" width="18" height="20" viewBox="0 0 18 20"><rect width="18" height="20" fill="#4ce23c"/><rect x="0" y="0" width="18" height="2.500" fill="#86ee7a"/><path d="M7.800 5h3.200l-0.300 6h-2.600z" fill="#e8f4e8"/><circle cx="9.500" cy="3.900" r="1.100" fill="#c8a080"/><path d="M8.100 11h2.600l-0.200 7h-0.900l-0.300-4-0.500 4h-1z" fill="#143a44"/></svg>
</div>
<span class="t lbl" style="left:120px;top:535.300px">Person</span>
<!-- playhead handle -->
<svg style="left:411px;top:395px" width="16" height="12" viewBox="0 0 16 12"><rect x="0.600" y="4" width="14.400" height="7.300" fill="#8c7238"/><polygon points="3.800,0.700 12,0.700 7.900,7.800" fill="#f4f2ea"/></svg>
<!-- arrow -->
<svg style="left:270px;top:488px" width="150" height="34" viewBox="0 0 150 34">
  <defs><linearGradient id="arw" x1="0" y1="0" x2="1" y2="0"><stop offset="0" stop-color="#f2cf5a"/><stop offset="1" stop-color="#e59a2c"/></linearGradient></defs>
  <path d="M7 23Q10 12 28 8.500Q52 4.500 92 13.500Q108 17 119 21L102 10.500 104 9.500 143 27 104 28.500 103 27 117 24Q104 20 90 17Q52 9 30 12Q14 14 9.500 24.500z" fill="url(#arw)" stroke="#c98a24" stroke-width="0.500"/>
  <path d="M9.500 21.500Q13 13 29 10Q52 6.300 92 15" stroke="#f8e596" stroke-width="1.100" fill="none" opacity="0.850"/>
</svg>
<!-- tooltip -->
<div class="a" style="left:415.500px;top:479px;width:105.500px;height:56px;background:#fdfdfd;border:1px solid #e4e4e4"></div>
<span class="t" style="left:418.500px;top:487.900px;font-size:9.200px;color:#646464">Person</span>
<span class="t" style="left:418.500px;top:501.400px;font-size:9.200px;color:#646464">Start Time: 00;00;00;00</span>
<span class="t" style="left:418.500px;top:515px;font-size:9.200px;color:#646464">End Time: 00;00;21;07</span>
<span class="t" style="left:418.500px;top:528.700px;font-size:9.200px;color:#646464">Duration: 00;00;21;07</span>
<!-- vertical scrollbar -->
<div class="a" style="left:1011px;top:406px;width:8px;height:158px;background:#171717"></div>
<div class="a" style="left:1012.500px;top:416px;width:5.500px;height:70px;background:#5c5c60;border-radius:2px"></div>
<svg style="left:1012px;top:408px" width="6" height="6" viewBox="0 0 6 6"><polygon points="3,0.500 6,5.500 0,5.500" fill="#d0d0d0"/></svg>
<svg style="left:1012px;top:553px" width="6" height="6" viewBox="0 0 6 6"><polygon points="0,0.500 6,0.500 3,5.500" fill="#d0d0d0"/></svg>
<!-- bottom bar -->
<div class="a" style="left:0px;top:562px;width:1024px;height:11px;background:#1a1a1a"></div>
<div class="a" style="left:96px;top:564px;width:906px;height:7px;background:#282828;border-radius:3px"></div>
<div class="a" style="left:97px;top:564.500px;width:662px;height:6px;background:#5e5e5e;border-radius:3px"></div>
<svg style="left:88px;top:564px" width="6" height="7" viewBox="0 0 6 7"><polygon points="5.500,0.500 5.500,6.500 0.500,3.500" fill="#d0d0d0"/></svg>
<svg style="left:1003px;top:564px" width="6" height="7" viewBox="0 0 6 7"><polygon points="0.500,0.500 0.500,6.500 5.500,3.500" fill="#d0d0d0"/></svg>
<div class="a" style="left:22px;top:567px;width:46px;height:1px;background:#4a4a4a"></div>
<div class="a" style="left:6px;top:563.500px;width:8px;height:8px;border-radius:50%;background:#d6d6d6"></div>
<div class="a" style="left:8px;top:567px;width:4px;height:1px;background:#222"></div>
<div class="a" style="left:54.500px;top:563.500px;width:8px;height:8px;border-radius:50%;background:#dcdcdc"></div>
<div class="a" style="left:75.500px;top:563.500px;width:8px;height:8px;border-radius:50%;background:#d6d6d6"></div>
<div class="a" style="left:77.500px;top:567px;width:4px;height:1px;background:#222"></div>
<div class="a" style="left:79px;top:565.500px;width:1px;height:4px;background:#222"></div>

<!--CLIPS-END-->

<!--TOOLBAR-END-->
<!--TIMELINE-->
</body>
</html>
